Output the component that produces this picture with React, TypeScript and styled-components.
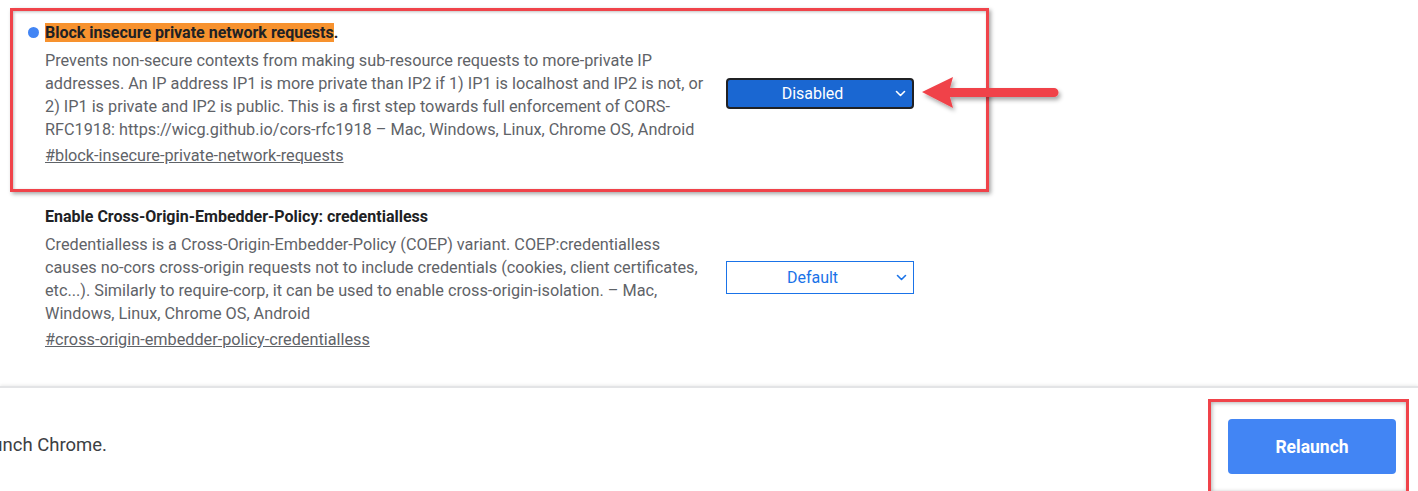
import React from 'react'
import styled, { createGlobalStyle } from 'styled-components'

const GlobalStyle = createGlobalStyle`
  html, body {
    margin: 0;
    padding: 0;
    background: #fff;
    overflow: hidden;
  }
  body {
    font-family: Roboto, 'Liberation Sans', Arial, sans-serif;
    color: #202124;
  }
`

type FlagData = {
  title: string
  description: string
  anchor: string
  value: string
  changed?: boolean
}

const flags: FlagData[] = [
  {
    title: 'Block insecure private network requests',
    description:
      'Prevents non-secure contexts from making sub-resource requests to more-private IP addresses. An IP address IP1 is more private than IP2 if 1) IP1 is localhost and IP2 is not, or 2) IP1 is private and IP2 is public. This is a first step towards full enforcement of CORS-RFC1918: https://wicg.github.io/cors-rfc1918 – Mac, Windows, Linux, Chrome OS, Android',
    anchor: '#block-insecure-private-network-requests',
    value: 'Disabled',
    changed: true
  },
  {
    title: 'Enable Cross-Origin-Embedder-Policy: credentialless',
    description:
      'Credentialless is a Cross-Origin-Embedder-Policy (COEP) variant. COEP:credentialless causes no-cors cross-origin requests not to include credentials (cookies, client certificates, etc...). Similarly to require-corp, it can be used to enable cross-origin-isolation. – Mac, Windows, Linux, Chrome OS, Android',
    anchor: '#cross-origin-embedder-policy-credentialless',
    value: 'Default'
  }
]

function Chevron() {
  return (
    <svg width="11" height="7" viewBox="0 0 11 7" fill="none">
      <path d="M1.5 1.5l4 4 4-4" stroke="currentColor" strokeWidth="1.6" strokeLinecap="round" strokeLinejoin="round" />
    </svg>
  )
}

function Arrow() {
  return (
    <ArrowOverlay width="150" height="44" viewBox="0 0 150 44">
      <defs>
        <filter id="arrowShadow" x="-10%" y="-30%" width="130%" height="170%">
          <feDropShadow dx="2" dy="3" stdDeviation="2" floodColor="#000" floodOpacity="0.35" />
        </filter>
      </defs>
      <g filter="url(#arrowShadow)">
        <path d="M4 20 L35 5 L32 16 L136 16 A4.5 4.5 0 0 1 136 25 L32 25 L35 36 Z" fill="#f0434a" />
      </g>
    </ArrowOverlay>
  )
}

function Flag({ flag, inset }: { flag: FlagData; inset?: boolean }) {
  return (
    <FlagRow inset={inset}>
      <FlagText>
        <FlagTitle changed={flag.changed}>
          {flag.changed ? <Mark>{flag.title}</Mark> : flag.title}
          {flag.changed && '.'}
        </FlagTitle>
        <FlagDescription>{flag.description}</FlagDescription>
        <FlagAnchor href={flag.anchor}>{flag.anchor}</FlagAnchor>
      </FlagText>
      <SelectBox changed={flag.changed}>
        <SelectLabel>{flag.value}</SelectLabel>
        <Chevron />
      </SelectBox>
    </FlagRow>
  )
}

export default function App() {
  return (
    <>
      <GlobalStyle />
      <Page>
        <FlagList>
          <Annotation>
            <Flag flag={flags[0]} inset />
          </Annotation>
          <Flag flag={flags[1]} />
        </FlagList>
        <Footer>
          <FooterMessage>
            <span>Your changes will take effect the next time you relaunch Chrome.</span>
          </FooterMessage>
          <ButtonAnnotation>
            <RelaunchButton>Relaunch</RelaunchButton>
          </ButtonAnnotation>
        </Footer>
        <Arrow />
      </Page>
    </>
  )
}

const Page = styled.div`
  position: relative;
  display: flex;
  flex-direction: column;
  height: 100vh;
`

const FlagList = styled.div`
  display: flex;
  flex-direction: column;
  gap: 15px;
  padding-top: 8px;
`

const Annotation = styled.div`
  margin-left: 10px;
  width: 973px;
  border: 3px solid #f0434a;
  box-shadow: 2px 2px 4px rgba(0, 0, 0, 0.35), inset 1px 1px 3px rgba(0, 0, 0, 0.25);
  padding: 12px 0 22px;
`

const FlagRow = styled.div<{ inset?: boolean }>`
  display: flex;
  align-items: center;
  gap: 17px;
  padding-left: ${p => (p.inset ? '32px' : '45px')};
`

const FlagText = styled.div`
  width: 664px;
  display: flex;
  flex-direction: column;
`

const FlagTitle = styled.div<{ changed?: boolean }>`
  position: relative;
  font-size: 16px;
  font-weight: 700;
  line-height: 19px;
  color: #202124;

  &::before {
    content: '';
    display: ${p => (p.changed ? 'block' : 'none')};
    position: absolute;
    left: -17px;
    top: 4px;
    width: 11px;
    height: 11px;
    border-radius: 50%;
    background: #4285f4;
  }
`

const Mark = styled.span`
  background: #f7922e;
`

const FlagDescription = styled.p`
  margin: 7px 0 0;
  font-size: 16.25px;
  line-height: 23px;
  color: #5f6368;
`

const FlagAnchor = styled.a`
  margin-top: 3px;
  font-size: 16.25px;
  line-height: 23px;
  color: #5f6368;
  text-decoration: underline;
  align-self: flex-start;
`

const SelectBox = styled.div<{ changed?: boolean }>`
  box-sizing: border-box;
  width: 188px;
  height: ${p => (p.changed ? '31px' : '33px')};
  margin-bottom: 3px;
  display: flex;
  align-items: center;
  padding: 0 6px 0 2px;
  border: ${p => (p.changed ? '2px solid #202124' : '1px solid #1a73e8')};
  border-radius: ${p => (p.changed ? '4px' : '0')};
  background: ${p => (p.changed ? '#1a67d2' : '#fff')};
  color: ${p => (p.changed ? '#fff' : '#1a73e8')};
`

const SelectLabel = styled.span`
  flex: 1;
  text-align: center;
  font-size: 16px;
`

const Footer = styled.div`
  box-sizing: border-box;
  margin-top: auto;
  height: 105px;
  display: flex;
  justify-content: space-between;
  align-items: flex-start;
  padding-top: 11px;
  border-top: 2px solid #e3e4e6;
  box-shadow: 0 -1px 3px rgba(0, 0, 0, 0.08);
`

const FooterMessage = styled.div`
  width: 107px;
  display: flex;
  justify-content: flex-end;
  white-space: nowrap;
  margin-top: 34px;
  font-size: 18.5px;
  line-height: 24px;
  color: #3c4043;
`

const ButtonAnnotation = styled.div`
  margin-right: 9px;
  border: 3px solid #f0434a;
  padding: 17px 10px 17px 17px;
  box-shadow: inset 1px 1px 4px rgba(0, 0, 0, 0.3);
`

const RelaunchButton = styled.button`
  display: block;
  width: 168px;
  height: 55px;
  border: none;
  border-radius: 4px;
  background: #4285f4;
  color: #fff;
  font-family: Roboto, 'Liberation Sans', Arial, sans-serif;
  font-size: 17.5px;
  font-weight: 700;
  cursor: pointer;
`

const ArrowOverlay = styled.svg`
  position: absolute;
  left: 918px;
  top: 72px;
`
